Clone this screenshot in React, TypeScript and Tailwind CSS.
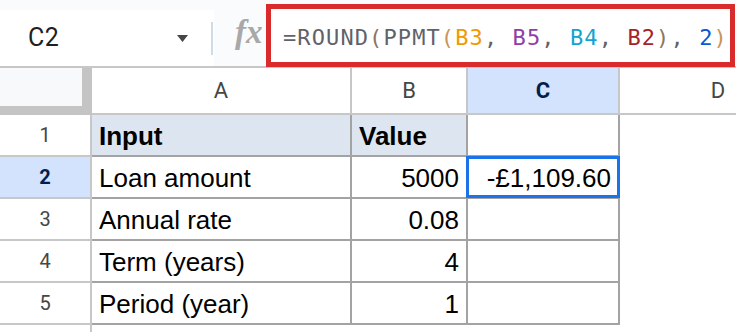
import React from "react";

type Row = { n: number; a: string; b: string; c?: string; head?: boolean };

const rows: Row[] = [
  { n: 1, a: "Input", b: "Value", head: true },
  { n: 2, a: "Loan amount", b: "5000", c: "-£1,109.60" },
  { n: 3, a: "Annual rate", b: "0.08" },
  { n: 4, a: "Term (years)", b: "4" },
  { n: 5, a: "Period (year)", b: "1" },
];

const formula: { t: string; c: string }[] = [
  { t: "=ROUND", c: "text-[#5f6368]" },
  { t: "(", c: "text-[#8d7560]" },
  { t: "PPMT", c: "text-[#5f6368]" },
  { t: "(", c: "text-[#c8955a]" },
  { t: "B3", c: "text-[#f29900]" },
  { t: ", ", c: "text-[#5f6368]" },
  { t: "B5", c: "text-[#8e3ea8]" },
  { t: ", ", c: "text-[#5f6368]" },
  { t: "B4", c: "text-[#12a4cf]" },
  { t: ", ", c: "text-[#5f6368]" },
  { t: "B2", c: "text-[#a52429]" },
  { t: ")", c: "text-[#8d7560]" },
  { t: ", ", c: "text-[#5f6368]" },
  { t: "2", c: "text-[#0b57d0]" },
  { t: ")", c: "text-[#c8955a]" },
];

export default function App() {
  return (
    <div className="w-[736px] h-[332px] overflow-hidden bg-white font-['Liberation_Sans',Arial,sans-serif]">
      {/* Toolbar: name box + formula bar */}
      <div className="flex h-[68px] border-b-2 border-[#c7c7c7] bg-[#f9fbfd]">
        <div className="mt-[10px] h-[56px] w-[214px] shrink-0 bg-white flex items-center pl-[28px]">
          <span className="font-['Roboto',sans-serif] text-[25px] tracking-[0.5px] text-[#1f1f1f]">C2</span>
          <svg className="ml-auto" width="11" height="7" viewBox="0 0 11 7">
            <polygon points="0,0 11,0 5.5,7" fill="#444746" />
          </svg>
          <div className="ml-[23px] mr-[1px] w-[2px] h-[33px] bg-[#cfdce6]" />
        </div>
        <div className="w-[52px] shrink-0 flex items-center pl-[21px] pb-[2px]">
          <span className="font-['Liberation_Serif',serif] italic font-bold text-[33px] leading-none text-[#a8a8a8]">fx</span>
        </div>
        <div className="mt-[4px] h-[63px] w-[469px] shrink-0 border-[5px] border-[#d92b2b] bg-white flex items-center pl-[12px] pt-[3px]">
          <span className="font-['DejaVu_Sans_Mono',monospace] text-[22px] tracking-[1.1px] whitespace-pre">
            {formula.map((s, i) => (
              <span key={i} className={s.c}>{s.t}</span>
            ))}
          </span>
        </div>
      </div>

      {/* Column headers */}
      <div className="flex h-[47px] font-['Roboto',sans-serif] text-[22px] text-[#444746]">
        <div className="w-[92px] shrink-0 h-full bg-[#c4c4c4]">
          <div className="w-[82px] h-[38px] bg-[#f8f9fa]" />
        </div>
        <div className="w-[260px] shrink-0 border-r-2 border-b-2 border-[#c7c7c7] flex items-center justify-center">A</div>
        <div className="w-[116px] shrink-0 border-r-2 border-b-2 border-[#c7c7c7] flex items-center justify-center">B</div>
        <div className="w-[152px] shrink-0 border-r-2 border-b-2 border-[#c7c7c7] bg-[#d3e3fd] font-bold text-[#041e49] flex items-center justify-center">C</div>
        <div className="w-[196px] shrink-0 border-b-2 border-[#c7c7c7] flex items-center justify-center">D</div>
      </div>

      {/* Rows */}
      {rows.map((r) => (
        <div key={r.n} className="flex h-[42px]">
          <div
            className={
              r.n === 2
                ? "w-[92px] shrink-0 border-r-2 border-b-2 border-[#c7c7c7] bg-[#d3e3fd] flex items-center justify-center font-['Roboto',sans-serif] text-[20px] font-bold text-[#041e49]"
                : "w-[92px] shrink-0 border-r-2 border-b-2 border-[#c7c7c7] flex items-center justify-center font-['Roboto',sans-serif] text-[20px] text-[#444746]"
            }
          >
            {r.n}
          </div>
          <div
            className={
              r.head
                ? "w-[260px] shrink-0 border-r-2 border-b-2 border-[#a3a3a3] bg-[#dde6f0] flex items-end pl-[7px] pb-[4px] text-[26px] leading-[30px] font-bold text-black"
                : "w-[260px] shrink-0 border-r-2 border-b-2 border-[#a3a3a3] flex items-end pl-[7px] pb-[4px] text-[26px] leading-[30px] text-black"
            }
          >
            {r.a}
          </div>
          <div
            className={
              r.head
                ? "w-[116px] shrink-0 border-r-2 border-b-2 border-[#a3a3a3] bg-[#dde6f0] flex items-end pl-[7px] pb-[4px] text-[26px] leading-[30px] font-bold text-black"
                : "w-[116px] shrink-0 border-r-2 border-b-2 border-[#a3a3a3] flex items-end justify-end pr-[7px] pb-[4px] text-[26px] leading-[30px] text-black"
            }
          >
            {r.b}
          </div>
          <div className="relative w-[152px] shrink-0 border-r-2 border-b-2 border-[#a3a3a3] flex items-end justify-end pr-[7px] pb-[4px] text-[26px] leading-[30px] text-black">
            {r.c}
            {r.n === 2 && (
              <div className="absolute left-[-2px] right-[-2px] top-[-1px] bottom-[-1px] border-[3px] border-[#1a73e8]" />
            )}
          </div>
          <div className="flex-1" />
        </div>
      ))}
      <div className="flex h-[42px]">
        <div className="w-[92px] shrink-0 border-r-2 border-[#c7c7c7]" />
      </div>
    </div>
  );
}
